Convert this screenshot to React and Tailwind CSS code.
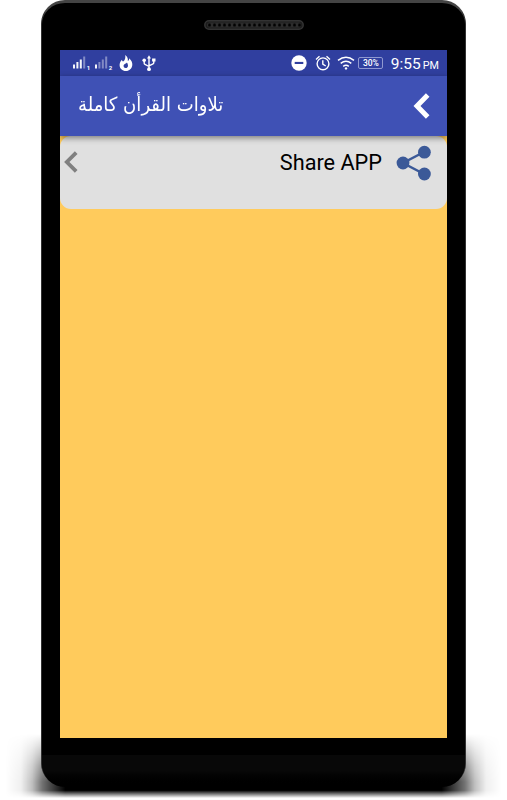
const statusIcon = 'shrink-0 overflow-visible';

function FloorShadow() {
  return (
    <svg className="absolute inset-0" width="507" height="800" viewBox="0 0 507 800" aria-hidden="true">
      <defs>
        <linearGradient id="side" gradientUnits="userSpaceOnUse" x1="6" y1="0" x2="501" y2="0">
          <stop offset="0" stopColor="#000" stopOpacity="0" />
          <stop offset="0.03" stopColor="#000" stopOpacity="0.06" />
          <stop offset="0.053" stopColor="#000" stopOpacity="0.25" />
          <stop offset="0.073" stopColor="#000" stopOpacity="0.55" />
          <stop offset="0.12" stopColor="#000" stopOpacity="1" />
          <stop offset="0.88" stopColor="#000" stopOpacity="1" />
          <stop offset="0.927" stopColor="#000" stopOpacity="0.55" />
          <stop offset="0.947" stopColor="#000" stopOpacity="0.25" />
          <stop offset="0.97" stopColor="#000" stopOpacity="0.06" />
          <stop offset="1" stopColor="#000" stopOpacity="0" />
        </linearGradient>
        <linearGradient id="fade" x1="0" x2="0" y1="0" y2="1">
          <stop offset="0" stopColor="#000" />
          <stop offset="0.5" stopColor="#bbb" />
          <stop offset="0.75" stopColor="#fff" />
          <stop offset="0.88" stopColor="#fff" />
          <stop offset="1" stopColor="#000" />
        </linearGradient>
        <mask id="sides">
          <rect x="0" y="734" width="507" height="64" fill="url(#fade)" />
        </mask>
      </defs>
      <rect x="6" y="734" width="495" height="64" fill="url(#side)" mask="url(#sides)" />
    </svg>
  );
}

function Speaker() {
  return (
    <svg width="100" height="10" viewBox="0 0 100 10" className="block" aria-hidden="true">
      <defs>
        <pattern id="mesh" width="5" height="5" patternUnits="userSpaceOnUse" x="3" y="2.5">
          <rect width="5" height="5" fill="#2c2c2c" />
          <circle cx="2.5" cy="2.6" r="1.5" fill="#000" />
        </pattern>
      </defs>
      <rect x="0.8" y="0.8" width="98.4" height="8.4" rx="4.2" fill="#1c1c1c" stroke="#333" strokeWidth="1.5" />
      <rect x="3" y="2.5" width="94" height="5" rx="2.5" fill="url(#mesh)" />
    </svg>
  );
}

function Signal({ sim, bars }) {
  const heights = [4, 6.5, 9, 12];
  return (
    <svg width="18" height="16" viewBox="0 0 18 16" fill="#fff" className={statusIcon}>
      {heights.map((h, i) => (
        <rect key={h} x={i * 3.4} y={13.5 - h} width="2" height={h} opacity={i < bars ? 0.95 : 0.4} />
      ))}
      <text x="13.8" y="15" fontSize="6" fontWeight="700" fontFamily="Roboto, sans-serif">{sim}</text>
    </svg>
  );
}

function StatusBar() {
  return (
    <div className="flex h-[26px] items-center bg-[#303f9f] text-white">
      <div className="flex items-center pl-[12.5px]">
        <Signal sim="1" bars={3} />
        <span className="w-[4.5px]" />
        <Signal sim="2" bars={1} />
        <svg width="14" height="17" viewBox="0 0 14 17" className={`${statusIcon} ml-[5.5px]`}>
          <path d="M6.2 0C8.9 1.8 9 4 8.8 6C10 5.6 10.2 4.5 10.2 3.3C12.5 5.5 13.5 7.6 13.3 10C13 13.6 10.3 16 7 16C3.3 16 .6 13.5 .6 10C.6 7.9 1.7 6.2 3 4.8C3.2 6.3 3.8 6.7 4.5 6.3C6 5.2 6.7 3 6.2 0Z" fill="#fff" />
          <path d="M7.9 7.6C7.3 8.9 4.6 9 4.6 11C4.6 12.2 5.4 13 6.6 13C8.2 13 9.1 11.9 9 10.4C8.9 9.2 8.5 8.3 7.9 7.6Z" fill="#303f9f" />
        </svg>
        <svg width="14" height="17" viewBox="0 0 14 17" className={`${statusIcon} ml-[9px]`} fill="none" stroke="#fff" strokeWidth="1.4">
          <path d="M7 2V14M2.2 5.5V8.2Q2.2 9 3 9.4L7 11.5M11.8 5V7.5Q11.8 8.4 11 8.8L7 10.8" />
          <path d="M7 0.2L9 3.4H5ZM10.1 3.6H13.5V6.6H10.1Z" fill="#fff" stroke="none" />
          <circle cx="2.2" cy="5.2" r="1.8" fill="#fff" stroke="none" />
          <circle cx="7" cy="14.2" r="1.9" fill="#fff" stroke="none" />
        </svg>
      </div>

      <div className="ml-auto flex items-center pr-[8px]">
        <svg width="16" height="16" viewBox="0 0 16 16" className={statusIcon}>
          <circle cx="8" cy="8" r="7.7" fill="#fff" />
          <rect x="3.7" y="6.9" width="8.6" height="2.1" fill="#303f9f" />
        </svg>
        <svg width="16" height="16" viewBox="0 0 16 16" className={`${statusIcon} ml-[7.5px]`} fill="none" stroke="#fff" strokeWidth="1.4">
          <circle cx="8" cy="8.8" r="5.9" />
          <path d="M1 4.4L4.5 1.3M15 4.4L11.5 1.3M7.8 5.2V9.2L10.7 11" />
        </svg>
        <svg width="18" height="14" viewBox="0 0 18 14" className={`${statusIcon} ml-[6px]`} fill="none" stroke="#fff" strokeWidth="1.5">
          <path d="M1 4.3Q9 -2 17 4.3M3.7 7.4Q9 3.3 14.3 7.4M6.2 10.3Q9 8.2 11.8 10.3" />
          <circle cx="9" cy="12.4" r="1.2" fill="#fff" stroke="none" />
        </svg>
        <span className="ml-[3.5px] flex h-[12px] w-[25px] items-center justify-center rounded-[2px] border border-[#8f98d0] font-['Roboto',sans-serif] text-[8.5px] font-medium leading-none">
          30%
        </span>
        <span className="ml-[7.5px] flex items-baseline whitespace-nowrap pt-[3px] font-['Roboto',sans-serif] text-[15.5px] leading-[26px]">
          9:55<span className="ml-[2px] text-[10.8px]">PM</span>
        </span>
      </div>
    </div>
  );
}

function AppBar() {
  return (
    <header className="relative z-10 flex h-[60px] items-center justify-between bg-[#3f51b5] pl-[18px] pr-[17px] text-white shadow-[0_2px_6px_rgba(0,0,0,0.45)]">
      <h1 dir="rtl" className="mb-[2px] origin-left scale-x-[0.925] whitespace-nowrap font-['DejaVu_Sans',sans-serif] text-[19.5px] leading-[30px]">
        تلاوات القرأن كاملة
      </h1>
      <svg width="17" height="26" viewBox="0 0 17 26" fill="none" stroke="#fff" strokeWidth="5">
        <path d="M14.7 2L4 13L14.7 24" />
      </svg>
    </header>
  );
}

function ShareRow() {
  return (
    <button className="flex h-[73px] w-full items-start justify-between rounded-[11px] bg-[#e0e0e0] pl-[4px] pr-[15px]">
      <svg width="14" height="22" viewBox="0 0 14 22" className="mt-[15px]" fill="none" stroke="#808080" strokeWidth="3.8">
        <path d="M12.2 1.6L2.8 11L12.2 20.4" />
      </svg>
      <span className="flex items-start">
        <span className="mt-[13px] whitespace-nowrap font-['Roboto',sans-serif] text-[21.7px] leading-[28px] text-black">Share APP</span>
        <svg width="36" height="36" viewBox="0 0 36 36" className="ml-[14px] mt-[8.5px]" fill="#3b5998">
          <path d="M28 7L7 18L28 29" fill="none" stroke="#3b5998" strokeWidth="2.5" />
          <circle cx="28.4" cy="7.2" r="6.4" />
          <circle cx="7" cy="18" r="6.4" />
          <circle cx="28.4" cy="29" r="6.4" />
        </svg>
      </span>
    </button>
  );
}

export default function App() {
  return (
    <main className="relative h-[800px] w-[507px] overflow-hidden bg-white">
      <FloorShadow />
      <div className="relative ml-[41px] flex h-[787px] w-[425px] flex-col rounded-[24px] border-x border-t-[3px] border-x-[#333] border-t-[#444] bg-black px-[18px]">
        <div className="flex h-[47px] shrink-0 justify-center pt-[17px]">
          <Speaker />
        </div>
        <div className="flex h-[688px] flex-col overflow-hidden bg-[#ffcb5c]">
          <StatusBar />
          <AppBar />
          <ShareRow />
        </div>
        <div className="-mx-[18px] mt-[17px] h-[32px] rounded-b-[23px] bg-linear-to-b from-[#080808] via-[#080808] to-black" />
      </div>
    </main>
  );
}
